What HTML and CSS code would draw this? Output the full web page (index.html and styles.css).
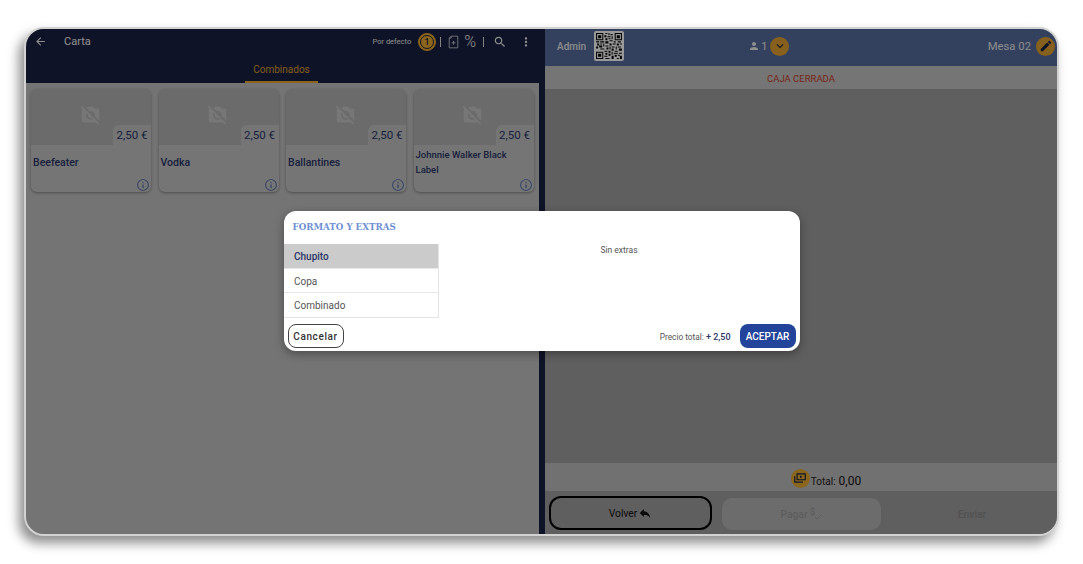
FILE: index.html
```html
<!DOCTYPE html>
<html lang="es">
<head>
<meta charset="utf-8">
<title>Formato y extras</title>
<link rel="stylesheet" href="styles.css">
</head>
<body>
<svg class="defs" width="0" height="0">
  <symbol id="i-nophoto" viewBox="0 0 24 24"><path d="M10.94 8.12 7.48 4.66 9 3h6l1.83 2H20c1.1 0 2 .9 2 2v12c0 .05-.01.1-.02.16l-5.1-5.1C16.96 13.71 17 13.36 17 13c0-2.76-2.24-5-5-5-.36 0-.71.04-1.06.12zm9.55 15.2L18.17 21H4c-1.1 0-2-.9-2-2V7c0-.59.27-1.12.68-1.49l-2-2L2.1 2.1l19.8 19.8-1.41 1.42zM14.49 17.32l-1.5-1.5c-.32.1-.64.18-.99.18-1.66 0-3-1.34-3-3 0-.35.08-.67.18-.99l-1.5-1.5C7.25 11.24 7 12.09 7 13c0 2.76 2.24 5 5 5 .91 0 1.76-.25 2.49-.68z"/></symbol>
  <symbol id="i-info" viewBox="0 0 24 24"><path d="M11 7h2v2h-2zm0 4h2v6h-2zm1-9C6.48 2 2 6.48 2 12s4.48 10 10 10 10-4.48 10-10S17.52 2 12 2zm0 18.4c-4.63 0-8.4-3.77-8.4-8.4S7.37 3.6 12 3.6s8.4 3.77 8.4 8.4-3.77 8.4-8.4 8.4z"/></symbol>
</svg>
<div class="device">
  <section class="left">
    <header class="left-head">
      <div class="toolbar">
        <svg class="ic-back" viewBox="0 0 24 24"><path d="M20 11H7.83l5.59-5.59L12 4l-8 8 8 8 1.41-1.41L7.83 13H20v-2z"/></svg>
        <span class="title">Carta</span>
        <span class="spacer"></span>
        <span class="tarifa">Por defecto</span>
        <span class="num-badge"><span>1</span></span>
        <span class="sep"></span>
        <svg class="ic-book" viewBox="0 0 14 18"><path d="M4 1.5h8.5v15h-11V4zM4 1.5V4H1.500M4.500 10h5M7 7.500v5" fill="none" stroke="currentColor" stroke-width="1"/></svg>
        <span class="percent">%</span>
        <span class="sep sep-b"></span>
        <svg class="ic-search" viewBox="0 0 24 24"><path d="M15.5 14h-.79l-.28-.27C15.41 12.59 16 11.11 16 9.5 16 5.91 13.09 3 9.5 3S3 5.910 3 9.5 5.910 16 9.5 16c1.610 0 3.090-.59 4.230-1.570l.27.28v.79l5 4.990L20.490 19l-4.990-5zm-6 0C7.010 14 5 11.990 5 9.500S7.010 5 9.500 5 14 7.010 14 9.500 11.990 14 9.500 14z"/></svg>
        <svg class="ic-more" viewBox="0 0 24 24"><path d="M12 8c1.100 0 2-.9 2-2s-.9-2-2-2-2 .9-2 2 .9 2 2 2zm0 2c-1.100 0-2 .9-2 2s.9 2 2 2 2-.9 2-2-.9-2-2-2zm0 6c-1.100 0-2 .9-2 2s.9 2 2 2 2-.9 2-2-.9-2-2-2z"/></svg>
      </div>
      <div class="tabs"><span class="tab">Combinados</span></div>
    </header>
    <div class="grid">
      <article class="card">
        <div class="thumb"><svg class="ic-nophoto"><use href="#i-nophoto"/></svg><span class="price">2,50 €</span></div>
        <div class="name">Beefeater</div>
        <svg class="ic-info"><use href="#i-info"/></svg>
      </article>
      <article class="card">
        <div class="thumb"><svg class="ic-nophoto"><use href="#i-nophoto"/></svg><span class="price">2,50 €</span></div>
        <div class="name">Vodka</div>
        <svg class="ic-info"><use href="#i-info"/></svg>
      </article>
      <article class="card">
        <div class="thumb"><svg class="ic-nophoto"><use href="#i-nophoto"/></svg><span class="price">2,50 €</span></div>
        <div class="name">Ballantines</div>
        <svg class="ic-info"><use href="#i-info"/></svg>
      </article>
      <article class="card">
        <div class="thumb"><svg class="ic-nophoto"><use href="#i-nophoto"/></svg><span class="price">2,50 €</span></div>
        <div class="name name-long">Johnnie Walker Black Label</div>
        <svg class="ic-info"><use href="#i-info"/></svg>
      </article>
    </div>
  </section>
  <section class="right">
    <header class="right-head">
      <div class="rh-left">
        <span class="admin">Admin</span>
        <svg class="qr" viewBox="-2 -2 29 29"><rect x="-2" y="-2" width="29" height="29" rx="2" fill="#fff"/><path d="M0 0h7v7H0zM1 1v5h5V1zM2 2h3v3H2zM18 0h7v7h-7zM19 1v5h5V1zM20 2h3v3h-3zM0 18h7v7H0zM1 19v5h5v-5zM2 20h3v3H2zM9 0h2v1H9zM12 0h1v2h-1zM14 1h2v1h-2zM8 2h2v2H8zM11 3h3v1h-3zM15 3h1v3h-1zM9 5h2v2H9zM12 5h2v1h-2zM13 7h3v1h-3zM0 8h3v1H0zM4 8h4v1H4zM9 8h3v2H9zM17 8h2v1h-2zM21 8h3v1h-3zM1 10h2v2H1zM4 10h2v1H4zM7 10h1v3H7zM13 10h2v2h-2zM16 10h3v1h-3zM20 10h2v2h-2zM23 10h2v1h-2zM0 13h2v2H0zM3 12h3v2H3zM9 12h3v1H9zM10 14h2v2h-2zM13 13h1v3h-1zM15 13h3v1h-3zM19 13h1v3h-1zM21 13h3v1h-3zM4 15h4v1H4zM15 15h2v2h-2zM22 15h3v2h-3zM8 17h3v1H8zM12 17h2v2h-2zM18 17h3v1h-3zM9 19h2v2H9zM15 18h1v3h-1zM17 19h4v1h-4zM22 19h3v1h-3zM12 20h2v2h-2zM18 21h2v2h-2zM21 21h2v1h-2zM8 22h3v1H8zM15 22h2v3h-2zM23 22h2v3h-2zM9 24h4v1H9zM20 24h2v1h-2z" fill="#000" fill-rule="evenodd"/></svg>
      </div>
      <div class="rh-center">
        <svg class="ic-person" viewBox="0 0 24 24"><path d="M12 12c2.210 0 4-1.790 4-4s-1.790-4-4-4-4 1.790-4 4 1.790 4 4 4zm0 2c-2.670 0-8 1.340-8 4v2h16v-2c0-2.660-5.330-4-8-4z"/></svg>
        <span class="guests">1</span>
        <span class="gold-btn"><svg viewBox="0 0 24 24"><path d="M7.410 8.590 12 13.170l4.590-4.580L18 10l-6 6-6-6z"/></svg></span>
      </div>
      <div class="rh-right">
        <span class="mesa">Mesa 02</span>
        <span class="gold-btn"><svg viewBox="0 0 24 24"><path d="M3 17.250V21h3.750L17.810 9.940l-3.750-3.750L3 17.250zM20.710 7.040c.39-.39.39-1.020 0-1.410l-2.340-2.340c-.39-.39-1.020-.39-1.410 0l-1.830 1.830 3.750 3.750 1.830-1.830z"/></svg></span>
      </div>
    </header>
    <div class="status">CAJA CERRADA</div>
    <div class="ticket"></div>
    <div class="total">
      <span class="coin"><svg viewBox="0 0 24 24"><path d="M7 5h14v10H7zM3 9v10h14" fill="none" stroke="currentColor" stroke-width="2"/><path d="M12 7.500v5l4-2.500z"/></svg></span>
      <span class="total-label">Total:</span>
      <span class="total-value">0,00</span>
    </div>
    <div class="actions">
      <button class="btn-volver" type="button">Volver <svg viewBox="0 0 24 24"><path d="M10 9V5l-7 7 7 7v-4.100c5 0 8.500 1.600 11 5.100-1-5-4-10-11-11z"/></svg></button>
      <button class="btn-pagar" type="button">Pagar <svg viewBox="0 0 14 14"><text x="1" y="8" font-size="9" class="dollar">$</text><path d="M6 10l2 2 4-4" fill="none" stroke="currentColor" stroke-width="1"/></svg></button>
      <button class="btn-enviar" type="button">Enviar</button>
    </div>
  </section>
  <div class="overlay">
    <div class="modal">
      <h2 class="modal-title">FORMATO Y EXTRAS</h2>
      <div class="modal-body">
        <ul class="formats">
          <li class="format selected">Chupito</li>
          <li class="format">Copa</li>
          <li class="format">Combinado</li>
        </ul>
        <p class="extras">Sin extras</p>
      </div>
      <div class="modal-foot">
        <button class="btn-cancel" type="button">Cancelar</button>
        <span class="spacer"></span>
        <span class="price-total">Precio total: <b>+ 2,50</b></span>
        <button class="btn-accept" type="button">ACEPTAR</button>
      </div>
    </div>
  </div>
</div>
</body>
</html>
```

FILE: styles.css
```css
* { box-sizing: border-box; }
html, body { margin: 0; height: 100%; background: #fff; overflow: hidden; }
body { padding: 27px 0 0 24px; font-family: Roboto, "Liberation Sans", sans-serif; }
.defs { position: absolute; }
.spacer { flex: 1; }

.device {
  position: relative;
  display: flex;
  width: 1035px;
  height: 509px;
  border: 2px solid #d2d2d2;
  border-radius: 20px;
  overflow: hidden;
  background: #9e9e9e;
  box-shadow: -5px 7px 12px rgba(0,0,0,.45);
}

.left {
  width: 519px;
  flex: none;
  display: flex;
  flex-direction: column;
  background: #c2c2c2;
  border-right: 6px solid #192143;
}
.left-head { height: 54px; background: #192143; color: #fff; margin-right: -6px; }
.toolbar { height: 25px; display: flex; align-items: center; padding: 0 12px 0 8px; }
.ic-back { width: 13px; height: 13px; fill: #eee; }
.title { font-size: 11px; margin-left: 17px; color: #eee; }
.tarifa { font-size: 7.500px; color: #e4e4e4; }
.num-badge {
  width: 18px; height: 18px; margin-left: 7px;
  border-radius: 50%;
  background: #e8a92c;
  border: 1px solid #e8a92c;
  display: flex; align-items: center; justify-content: center;
}
.num-badge span {
  width: 14px; height: 14px; border-radius: 50%;
  border: 1px solid #192143;
  color: #192143;
  font-size: 9px; line-height: 12px; text-align: center; font-weight: 500;
}
.sep { width: 1px; height: 10px; background: #ddd; margin-left: 4px; }
.sep-b { margin-left: 7px; }
.ic-book { width: 11px; height: 14px; margin-left: 7px; color: #ddd; }
.percent { font-size: 16px; margin-left: 5px; font-weight: 300; color: #eee; }
.ic-search { width: 14px; height: 14px; fill: #eee; margin-left: 9px; }
.ic-more { width: 14px; height: 14px; fill: #eee; margin-left: 12px; }
.tabs { display: flex; justify-content: center; height: 29px; padding-right: 8px; }
.tab {
  width: 73px; text-align: center;
  font-size: 10px; line-height: 23px;
  padding-top: 4px;
  color: #d89c2b;
  border-bottom: 2px solid #e6a82f;
}

.grid {
  display: grid;
  grid-template-columns: repeat(4, 120px);
  column-gap: 7.500px;
  padding: 6px 5px;
}
.card {
  position: relative;
  height: 103px;
  background: #c4c4c4;
  border-radius: 6px;
  box-shadow: 0 1px 3px rgba(0,0,0,.35);
  overflow: hidden;
}
.thumb {
  position: relative;
  height: 56px;
  background: #b2b2b2;
  display: flex; justify-content: center; padding-top: 15px;
}
.ic-nophoto { width: 21px; height: 21px; fill: #c6c6c6; margin-right: 2px; }
.price {
  position: absolute; right: 0; bottom: 0;
  width: 38px; height: 20px;
  background: #c4c4c4;
  border-top-left-radius: 6px;
  font-size: 11.500px; line-height: 20px;
  color: #2a3566;
  white-space: nowrap;
  padding-left: 3.500px;
}
.name {
  height: 34px; display: flex; align-items: center;
  padding: 0 2px;
  font-size: 10.500px; font-weight: 500; line-height: 15px;
  color: #2a3566;
}
.name-long { font-size: 9.500px; }
.ic-info { position: absolute; right: 1px; bottom: 0; width: 14px; height: 14px; fill: #4d6aa8; }

.right { flex: 1; display: flex; flex-direction: column; min-width: 0; }
.right-head {
  height: 37px; flex: none;
  display: flex; align-items: center; justify-content: space-between;
  background: #556d9d;
  padding: 0 2px 3px 12px;
  color: #e8e8e8;
}
.rh-left { display: flex; align-items: center; }
.admin { font-size: 10px; font-weight: 500; }
.qr { width: 30px; height: 30px; margin-left: 8px; }
.rh-center { display: flex; align-items: center; justify-content: center; margin-right: 74px; }
.ic-person { width: 12px; height: 12px; fill: #eee; }
.guests { font-size: 11px; margin-left: 1px; margin-right: 3px; }
.gold-btn {
  width: 19px; height: 19px; border-radius: 50%; background: #e0a030;
  display: flex; align-items: center; justify-content: center;
}
.gold-btn svg { width: 14px; height: 14px; fill: #192143; }
.rh-right { display: flex; align-items: center; justify-content: flex-end; }
.mesa { font-size: 11.300px; margin-right: 5px; }

.status {
  height: 23px; flex: none;
  background: #c3c3c3;
  text-align: center;
  font-size: 9.500px; line-height: 25px;
  color: #c8402a;
}
.ticket { flex: 1; background: #9e9e9e; }
.total {
  height: 28px; flex: none;
  background: #bcbcbc;
  display: flex; align-items: center; justify-content: center;
  padding-left: 50px;
  color: #222;
}
.coin {
  width: 19px; height: 19px; margin-top: 2px; border-radius: 50%; background: #e6a82f;
  display: flex; align-items: center; justify-content: center;
  color: #192143;
}
.coin svg { width: 14px; height: 14px; fill: #192143; }
.total-label { font-size: 10px; margin: 8px 3px 0 1px; }
.total-value { font-size: 12px; font-weight: 400; margin-top: 8px; color: #111; }
.actions {
  height: 43px; flex: none;
  background: #9e9e9e;
  display: grid; grid-template-columns: 163px 159px 1fr;
  column-gap: 10px;
  padding: 5px 4px 4px 4px;
}
.actions button { font-family: inherit; font-size: 10.300px; display: flex; align-items: center; justify-content: center; gap: 1px; padding: 0; }
.actions svg { width: 14px; height: 14px; }
.btn-volver { background: transparent; border: 2px solid #000; border-radius: 12px; color: #111; }
.btn-volver svg { fill: #111; }
.btn-pagar { margin-top: 2px; background: #b4b4b4; border: 0; border-radius: 10px; color: #9c9c9c; font-weight: 500; }
.btn-pagar svg { color: #9c9c9c; fill: #9c9c9c; }
.dollar { font-family: Roboto, sans-serif; }
.btn-enviar { margin-top: 2px; padding-left: 2px; background: transparent; border: 0; color: #888; font-weight: 500; }

.overlay {
  position: absolute; inset: 0;
  background: rgba(0,0,0,.4);
  display: flex; align-items: center; justify-content: center;
}
.modal {
  width: 516px; height: 140px;
  margin-top: -1px;
  background: #fff;
  border-radius: 12px;
  display: flex; flex-direction: column;
  box-shadow: 0 3px 10px rgba(0,0,0,.35);
  color: #444;
}
.modal-title {
  margin: 0; height: 33px; padding: 10px 0 0 9px;
  font-family: "DejaVu Serif", "Liberation Serif", serif;
  font-size: 8.700px; font-weight: 700; line-height: 13px;
  color: #6e90d4;
}
.modal-body { height: 74px; display: flex; flex: none; }
.formats {
  list-style: none; margin: 0; padding: 0;
  width: 155px; flex: none;
  border-right: 1px solid #e4e4e4;
  border-bottom: 1px solid #e4e4e4;
}
.format {
  height: 24.600px; padding-left: 10.500px;
  font-size: 10px; line-height: 25px;
  border-bottom: 1px solid #e8e8e8;
  color: #555;
}
.format:last-child { border-bottom: 0; }
.selected { background: #cbcbcb; color: #2a3566; font-weight: 500; }
.extras { flex: 1; margin: 0; text-align: center; font-size: 8.500px; line-height: 13px; color: #555; }
.modal-foot { flex: 1; display: flex; align-items: flex-start; padding: 6px 4px 0; }
.btn-cancel {
  width: 56px; height: 24px; padding: 0;
  background: #fff; border: 1px solid #444; border-radius: 8px;
  font-family: inherit; font-size: 10px; font-weight: 500; letter-spacing: .6px; color: #333;
}
.price-total { font-size: 8.300px; color: #555; margin: 8px 9px 0 0; }
.price-total b { font-size: 9px; font-weight: 500; color: #2a3566; }
.btn-accept {
  width: 56px; height: 24px; padding: 0;
  background: #23449b; border: 0; border-radius: 8px;
  font-family: inherit; font-size: 10px; font-weight: 500; color: #fff;
}
```
